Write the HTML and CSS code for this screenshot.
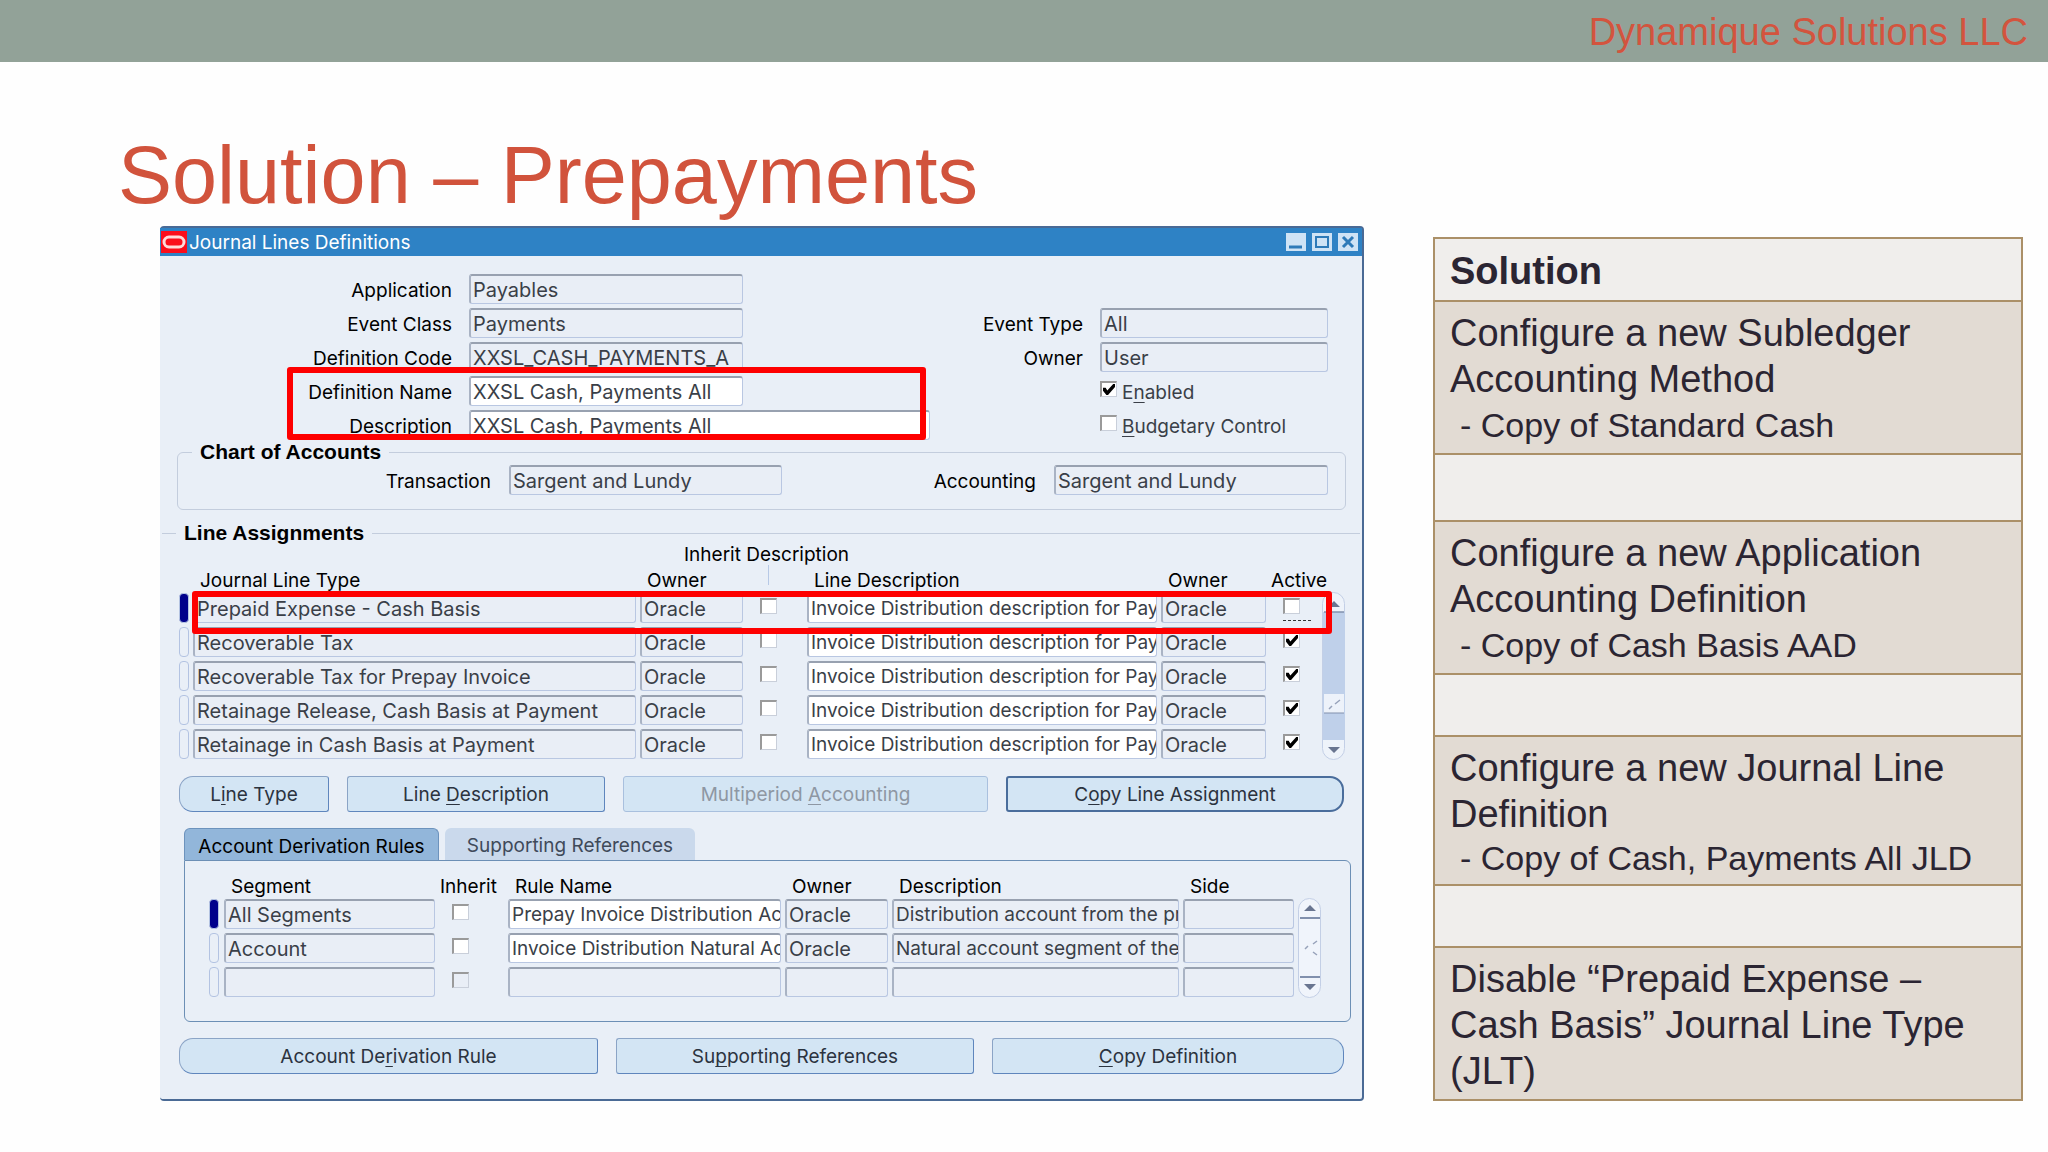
FILE: index.html
```html
<!DOCTYPE html>
<html lang="en">
<head>
<meta charset="utf-8">
<title>Solution – Prepayments</title>
<link rel="stylesheet" href="styles.css">
</head>
<body>
<header class="banner">Dynamique Solutions LLC</header>
<h1 class="title">Solution – Prepayments</h1>
<main class="content">
  <section class="window" aria-label="Journal Lines Definitions">
    <div class="titlebar">
      <svg class="logo" viewBox="0 0 26 22" aria-hidden="true"><rect width="26" height="22" fill="#fb0d1b"/><rect x="3" y="6" width="20" height="10" rx="5" fill="none" stroke="#ffd9d9" stroke-width="3"/></svg>
      <span class="titlebar-text">Journal Lines Definitions</span>
      <button class="winbtn" aria-label="Minimize"><svg viewBox="0 0 20 18"><path d="M3 14h13" stroke="#2e7ab8" stroke-width="3"/></svg></button>
      <button class="winbtn" aria-label="Maximize"><svg viewBox="0 0 20 18"><rect x="4" y="4" width="12" height="10" fill="none" stroke="#2e7ab8" stroke-width="2"/></svg></button>
      <button class="winbtn" aria-label="Close"><svg viewBox="0 0 20 18"><path d="M5 4l10 10M15 4L5 14" stroke="#2e7ab8" stroke-width="3"/></svg></button>
    </div>

    <div class="form">
      <label class="lbl" for="app">Application</label><input class="field short" id="app" value="Payables" readonly>
      <label class="lbl" for="cls">Event Class</label><input class="field" id="cls" value="Payments" readonly>
      <label class="lbl" for="type">Event Type</label><input class="field" id="type" value="All" readonly>
      <label class="lbl" for="code">Definition Code</label><input class="field" id="code" value="XXSL_CASH_PAYMENTS_A" readonly>
      <label class="lbl" for="owner">Owner</label><input class="field" id="owner" value="User" readonly>
      <label class="lbl" for="name">Definition Name</label><input class="field edit" id="name" value="XXSL Cash, Payments All">
      <label class="check"><input type="checkbox" class="box" checked><span>E<u>n</u>abled</span></label>
      <label class="lbl" for="desc">Description</label><input class="field edit wide" id="desc" value="XXSL Cash, Payments All">
      <label class="check"><input type="checkbox" class="box"><span><u>B</u>udgetary Control</span></label>
      <div class="mark mark-name"></div>
    </div>

    <fieldset class="chart">
      <legend>Chart of Accounts</legend>
      <div class="chart-grid">
        <label class="lbl" for="trx">Transaction</label><input class="field" id="trx" value="Sargent and Lundy" readonly>
        <label class="lbl" for="acc">Accounting</label><input class="field" id="acc" value="Sargent and Lundy" readonly>
      </div>
    </fieldset>

    <fieldset class="lines">
      <legend>Line Assignments</legend>
      <div class="grid-area">
        <table class="data">
          <colgroup><col style="width:14px"><col style="width:447px"><col style="width:107px"><col style="width:60px"><col style="width:354px"><col style="width:109px"><col style="width:52px"></colgroup>
          <thead>
            <tr class="head-top"><td colspan="2"></td><th colspan="3" class="inherit-head">Inherit Description</th><td colspan="2"></td></tr>
            <tr class="head"><td></td><th>Journal Line Type</th><th>Owner</th><td><span class="tick"></span></td><th>Line Description</th><th>Owner</th><th class="flush">Active</th></tr>
          </thead>
          <tbody>
            <tr><td><span class="rec current"></span></td><td><input class="field" aria-label="Journal line type" value="Prepaid Expense - Cash Basis" readonly></td><td><input class="field" aria-label="Owner" value="Oracle" readonly></td><td class="cb"><input type="checkbox" class="box" aria-label="Inherit description"></td><td><input class="field edit compact" aria-label="Line description" value="Invoice Distribution description for Payables"></td><td><input class="field" aria-label="Owner" value="Oracle" readonly></td><td class="cb focus"><input type="checkbox" class="box" aria-label="Active"></td></tr>
            <tr><td><span class="rec"></span></td><td><input class="field" aria-label="Journal line type" value="Recoverable Tax" readonly></td><td><input class="field" aria-label="Owner" value="Oracle" readonly></td><td class="cb"><input type="checkbox" class="box" aria-label="Inherit description"></td><td><input class="field edit compact" aria-label="Line description" value="Invoice Distribution description for Payables"></td><td><input class="field" aria-label="Owner" value="Oracle" readonly></td><td class="cb"><input type="checkbox" class="box" aria-label="Active" checked></td></tr>
            <tr><td><span class="rec"></span></td><td><input class="field" aria-label="Journal line type" value="Recoverable Tax for Prepay Invoice" readonly></td><td><input class="field" aria-label="Owner" value="Oracle" readonly></td><td class="cb"><input type="checkbox" class="box" aria-label="Inherit description"></td><td><input class="field edit compact" aria-label="Line description" value="Invoice Distribution description for Payables"></td><td><input class="field" aria-label="Owner" value="Oracle" readonly></td><td class="cb"><input type="checkbox" class="box" aria-label="Active" checked></td></tr>
            <tr><td><span class="rec"></span></td><td><input class="field" aria-label="Journal line type" value="Retainage Release, Cash Basis at Payment" readonly></td><td><input class="field" aria-label="Owner" value="Oracle" readonly></td><td class="cb"><input type="checkbox" class="box" aria-label="Inherit description"></td><td><input class="field edit compact" aria-label="Line description" value="Invoice Distribution description for Payables"></td><td><input class="field" aria-label="Owner" value="Oracle" readonly></td><td class="cb"><input type="checkbox" class="box" aria-label="Active" checked></td></tr>
            <tr><td><span class="rec"></span></td><td><input class="field" aria-label="Journal line type" value="Retainage in Cash Basis at Payment" readonly></td><td><input class="field" aria-label="Owner" value="Oracle" readonly></td><td class="cb"><input type="checkbox" class="box" aria-label="Inherit description"></td><td><input class="field edit compact" aria-label="Line description" value="Invoice Distribution description for Payables"></td><td><input class="field" aria-label="Owner" value="Oracle" readonly></td><td class="cb"><input type="checkbox" class="box" aria-label="Active" checked></td></tr>
          </tbody>
        </table>
        <svg class="scroll" width="23" height="168" viewBox="0 0 23 168" aria-hidden="true">
          <rect x=".5" y=".5" width="22" height="167" rx="11" fill="#eef3fa" stroke="#c3cfe6"/>
          <rect x="1" y="20" width="22" height="128" fill="#bfd0ea"/>
          <path d="M2 20h20" stroke="#8190ad" stroke-width="1.5"/>
          <rect x="2" y="102" width="20" height="19" fill="#edf2fa"/>
          <path d="M2 121h20" stroke="#8190ad" stroke-width="1"/>
          <path d="M7 117l3-3M13 112l5-4" stroke="#97a2ba" stroke-width="1.5"/>
          <path d="M6 15l6-6 6 6zM6 155h12l-6 6z" fill="#697590"/>
        </svg>
        <div class="mark mark-line"></div>
      </div>
    </fieldset>

    <div class="buttons line-buttons">
      <button class="btn first">L<u>i</u>ne Type</button>
      <button class="btn">Line <u>D</u>escription</button>
      <button class="btn" disabled>Multiperiod <u>A</u>ccounting</button>
      <button class="btn last default">C<u>o</u>py Line Assignment</button>
    </div>

    <div class="tabs" role="tablist">
      <button class="tab active" role="tab" aria-selected="true">Account Derivation Rules</button>
      <button class="tab" role="tab" aria-selected="false">Supporting References</button>
    </div>
    <div class="panel" role="tabpanel">
      <table class="data">
        <colgroup><col style="width:15px"><col style="width:215px"><col style="width:69px"><col style="width:277px"><col style="width:107px"><col style="width:291px"><col style="width:115px"></colgroup>
        <thead>
          <tr class="head"><td></td><th>Segment</th><th class="flush">Inherit</th><th>Rule Name</th><th>Owner</th><th>Description</th><th>Side</th></tr>
        </thead>
        <tbody>
          <tr><td><span class="rec current"></span></td><td><input class="field" aria-label="Segment" value="All Segments" readonly></td><td class="cb"><input type="checkbox" class="box" aria-label="Inherit"></td><td><input class="field edit compact" aria-label="Rule name" value="Prepay Invoice Distribution Account"></td><td><input class="field" aria-label="Owner" value="Oracle" readonly></td><td><input class="field compact" aria-label="Description" value="Distribution account from the prepayment" readonly></td><td><input class="field" aria-label="Side" readonly></td></tr>
          <tr><td><span class="rec"></span></td><td><input class="field" aria-label="Segment" value="Account" readonly></td><td class="cb"><input type="checkbox" class="box" aria-label="Inherit"></td><td><input class="field edit compact" aria-label="Rule name" value="Invoice Distribution Natural Account"></td><td><input class="field" aria-label="Owner" value="Oracle" readonly></td><td><input class="field compact" aria-label="Description" value="Natural account segment of the invoice" readonly></td><td><input class="field" aria-label="Side" readonly></td></tr>
          <tr><td><span class="rec"></span></td><td><input class="field" aria-label="Segment" readonly></td><td class="cb"><input type="checkbox" class="box" aria-label="Inherit" disabled></td><td><input class="field" aria-label="Rule name" readonly></td><td><input class="field" aria-label="Owner" readonly></td><td><input class="field" aria-label="Description" readonly></td><td><input class="field" aria-label="Side" readonly></td></tr>
        </tbody>
      </table>
      <svg class="scroll" width="23" height="100" viewBox="0 0 23 100" aria-hidden="true">
        <rect x=".5" y=".5" width="22" height="99" rx="11" fill="#f0f4fb" stroke="#c3cfe6"/>
        <path d="M2 20h20M2 79h20" stroke="#8190ad" stroke-width="2"/>
        <path d="M6 13l6-6 6 6zM6 86h12l-6 6z" fill="#697590"/>
        <path d="M7 51l3-3M15 46l4-3M15 54l4 3" stroke="#97a2ba" stroke-width="1.5"/>
      </svg>
    </div>

    <div class="buttons bottom-buttons">
      <button class="btn first">Account De<u>r</u>ivation Rule</button>
      <button class="btn">Su<u>p</u>porting References</button>
      <button class="btn last"><u>C</u>opy Definition</button>
    </div>
  </section>

  <table class="solution">
    <thead><tr class="light"><th>Solution</th></tr></thead>
    <tbody>
      <tr><td>Configure a new Subledger Accounting Method<p class="sub">- Copy of Standard Cash</p></td></tr>
      <tr class="light gap-tall"><td></td></tr>
      <tr><td>Configure a new Application Accounting Definition<p class="sub">- Copy of Cash Basis AAD</p></td></tr>
      <tr class="light gap"><td></td></tr>
      <tr><td>Configure a new Journal Line Definition<p class="sub tight">- Copy of Cash, Payments All JLD</p></td></tr>
      <tr class="light gap"><td></td></tr>
      <tr><td>Disable “Prepaid Expense – Cash Basis” Journal Line Type (JLT)</td></tr>
    </tbody>
  </table>
</main>
</body>
</html>
```
FILE: styles.css
```css
* { box-sizing: border-box; }

body {
  margin: 0;
  background: #fefefe;
  font-family: "Liberation Sans", Arial, sans-serif;
  color: #2b2532;
}

.banner {
  height: 62px;
  padding: 0 20px;
  background: #92a298;
  color: #d3543e;
  font-size: 38px;
  line-height: 64px;
  text-align: right;
}

.title {
  margin: 0;
  padding: 68px 0 0 118px;
  color: #d1533c;
  font-size: 81px;
  font-weight: 400;
  line-height: 90px;
}

.content {
  display: grid;
  grid-template-columns: minmax(0, 1204fr) minmax(0, 590fr);
  gap: 69px;
  align-items: start;
  margin-top: 6px;
  padding: 0 25px 0 160px;
}

/* application window */
.window {
  border: solid #4a6a95;
  border-width: 2px 2px 2px 0;
  border-radius: 4px;
  padding-bottom: 25px;
  background: #e9eff7;
  font-family: Inter, "Liberation Sans", sans-serif;
  font-size: 19px;
  color: #000;
}

.window input,
.window button { font: inherit; }

.titlebar {
  display: flex;
  align-items: center;
  gap: 6px;
  height: 28px;
  padding: 0 4px 0 1px;
  background: #2e82c5;
  color: #fff;
}

.logo { width: 26px; height: 22px; }
.titlebar-text { flex: 1; margin-left: -4px; }

.winbtn {
  display: flex;
  width: 20px;
  height: 18px;
  padding: 0;
  border: 0;
  background: #cfe3f5;
}

.form {
  position: relative;
  display: grid;
  grid-template-columns: 292fr 274fr 323fr 228fr;
  grid-auto-rows: 30px;
  gap: 4px 17px;
  padding: 18px 34px 0 0;
}

.lbl { line-height: 34px; text-align: right; white-space: nowrap; }
.check { grid-column: 4; display: flex; gap: 5px; line-height: 34px; color: #3a3f48; white-space: nowrap; }

.window .field {
  display: block;
  width: 100%;
  min-width: 0;
  height: 30px;
  padding: 0 0 0 2px;
  border: solid #b9c7e2;
  border-width: 2px 1px 1px 2px;
  border-top-color: #98a1b0;
  border-left-color: #a9b3c4;
  border-radius: 3px;
  outline: 0;
  background: #e9eef6;
  color: #3a3f48;
  font-size: 20px;
}
.window .edit { background: #fff; }
.window .compact { font-size: 19px; }
.window .short { grid-column: 2 / 5; width: calc(100% * 274 / 859); }
.window .wide { grid-column: 2 / 4; width: 75%; }

.box {
  flex: none;
  display: block;
  appearance: none;
  width: 17px;
  height: 16px;
  margin: 5px 0 0;
  border: solid #c9cfda;
  border-width: 2px 1px 1px 2px;
  border-top-color: #9a9a9a;
  border-left-color: #9a9a9a;
  background: #fff;
}
.box:disabled { background: #e9eef6; }
.box:checked::before {
  content: "";
  display: block;
  width: 12px;
  height: 11px;
  margin: 1px;
  background: #000;
  clip-path: polygon(0 35%, 22% 35%, 36% 58%, 85% 0, 100% 0, 100% 28%, 42% 100%, 28% 100%, 0 62%);
}

.window u { text-decoration-thickness: 1px; text-underline-offset: 3px; text-decoration-skip-ink: none; }

.mark { position: absolute; border: 6px solid #fe0000; border-radius: 3px; pointer-events: none; }
.mark-name { left: 127px; right: 436px; top: 111px; height: 73px; }
.mark-line { left: 13px; right: 13px; top: 46px; height: 43px; }

fieldset { min-width: 0; padding: 0; }
legend {
  margin-left: 14px;
  padding: 0 8px;
  font-family: "Liberation Sans", Arial, sans-serif;
  font-size: 21px;
  font-weight: 700;
  line-height: 24px;
}

.chart {
  margin: 0 16px 0 17px;
  padding: 1px 0 14px;
  border: 1px solid #c3cddd;
  border-radius: 6px;
}
.chart-grid {
  display: grid;
  grid-template-columns: 313fr 273fr 236fr 274fr;
  gap: 18px;
  height: 30px;
  padding-right: 17px;
}

.lines {
  margin: 11px 2px 0;
  padding: 0 15px 0 17px;
  border: 0;
  border-top: 1px solid #c3cddd;
}
.lines legend { margin-left: -3px; }
.grid-area { position: relative; display: flex; align-items: flex-end; }

.data {
  flex: 1;
  width: 0;
  table-layout: fixed;
  border-collapse: collapse;
}
.data th { padding: 0 0 0 7px; font-weight: 400; text-align: left; white-space: nowrap; line-height: 20px; }
.data td { padding: 0; }
.data tbody td { height: 34px; padding-right: 4px; vertical-align: top; }
.data .cb { padding: 0 0 0 13px; }
.data .flush { padding-left: 1px; }
.data .inherit-head { padding-left: 44px; }
.head-top { height: 20px; }
.head { height: 28px; }
.head th, .head td { vertical-align: bottom; }
.head th { padding-bottom: 2px; }
.tick { display: block; width: 1px; height: 20px; margin: 0 0 8px 21px; background: #b7c9e6; }
.focus::after { content: ""; display: block; width: 28px; border-top: 1px dashed #333; margin-top: 6px; }

.rec {
  display: block;
  width: 10px;
  height: 30px;
  border: 1px solid #b3c3e2;
  border-radius: 4px;
}
.rec.current { background: #00008b; }

.scroll { flex: none; display: block; margin-bottom: 3px; }

.buttons { display: grid; gap: 18px; margin: 0 18px 0 19px; }
.line-buttons { grid-template-columns: 150fr 258fr 365fr 338fr; margin-top: 13px; }
.bottom-buttons { grid-template-columns: 419fr 358fr 352fr; margin-top: 16px; }

.btn {
  height: 36px;
  padding: 0;
  border: 1px solid #8ba4c6;
  border-right-color: #5f86bd;
  border-bottom-color: #5f86bd;
  border-radius: 3px;
  background: #d3e5f4;
  color: #2b333f;
}
.btn.first { border-radius: 14px 3px 3px 14px; }
.btn.last { border-radius: 3px 14px 14px 3px; }
.btn.default { border: 2px solid #4a6d9c; }
.btn:disabled { color: #8e97a3; border-color: #a9c0de; }

.tabs { display: flex; gap: 6px; margin: 16px 11px 0 24px; }
.tab {
  width: 250px;
  height: 32px;
  padding: 3px 0 0;
  border: 0;
  border-radius: 6px 6px 0 0;
  background: #cad9ec;
  color: #3f4a5a;
}
.tab.active { width: 255px; border: 1px solid #6d93bd; border-bottom: 0; background: #92b6da; color: #000; }

.panel {
  display: flex;
  align-items: flex-end;
  margin: 0 11px 0 24px;
  padding: 0 29px 20px 24px;
  border: 1px solid #6c8fb5;
  border-radius: 0 6px 6px 6px;
}
.panel .head { height: 38px; }

/* solution list */
.solution {
  width: 100%;
  margin-top: 11px;
  border-collapse: collapse;
  font-size: 38px;
  line-height: 46px;
}
.solution th,
.solution td {
  padding: 8px 14px 5px 15px;
  border: 2px solid #ab9068;
  background: #e2dbd3;
  font-weight: 400;
  text-align: left;
}
.solution .light > * { background: #f0eeec; }
.solution th { height: 63px; padding: 7px 14px 5px 15px; font-weight: 700; }
.solution .gap-tall td { height: 67px; }
.solution .gap td { height: 62px; }
.sub { margin: 0; padding-left: 10px; font-size: 34px; white-space: nowrap; }
.sub.tight { line-height: 42px; }
```
